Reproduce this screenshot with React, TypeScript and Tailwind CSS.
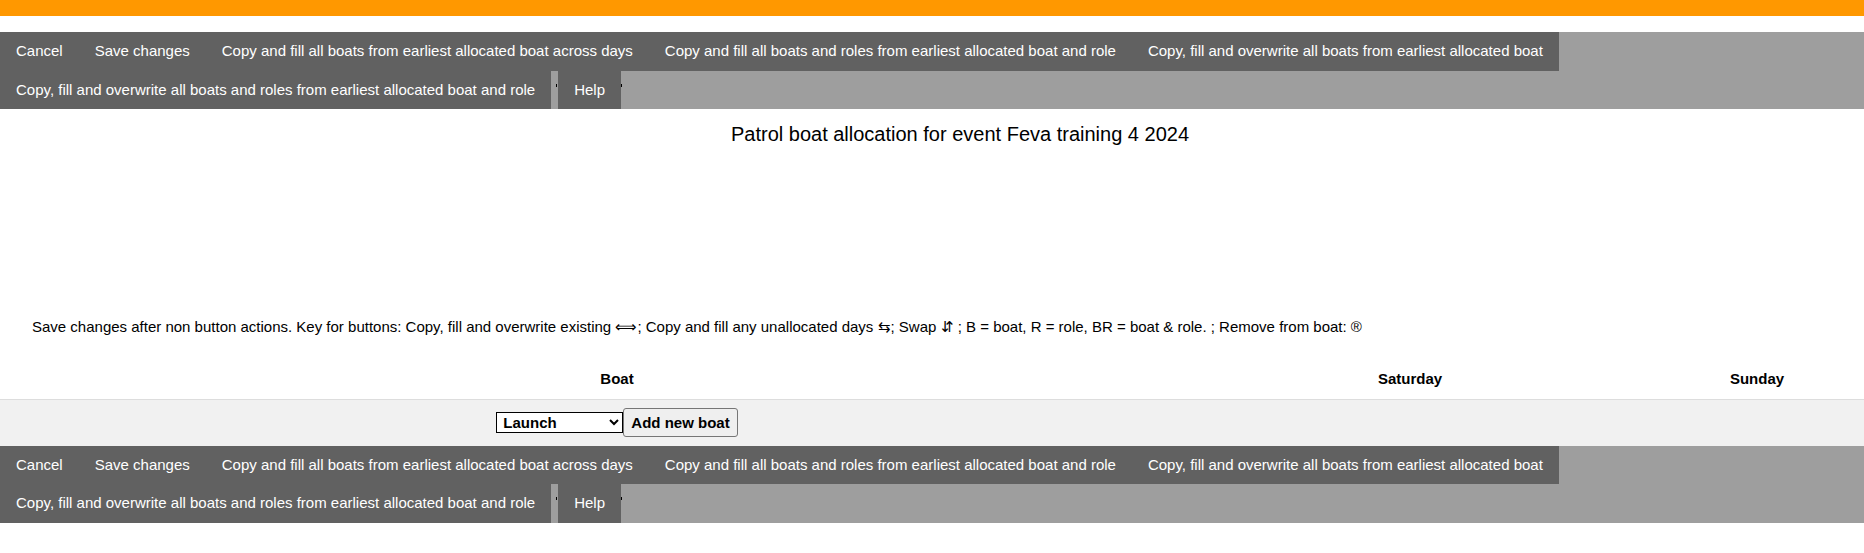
import React from 'react';

const navItems = [
  'Cancel',
  'Save changes',
  'Copy and fill all boats from earliest allocated boat across days',
  'Copy and fill all boats and roles from earliest allocated boat and role',
  'Copy, fill and overwrite all boats from earliest allocated boat',
  'Copy, fill and overwrite all boats and roles from earliest allocated boat and role',
];

const NavBar = () => (
  <div className="flex flex-wrap bg-[#9e9e9e]">
    {navItems.map((label) => (
      <button key={label} className="px-4 py-2 bg-[#616161] text-white text-[15px] leading-normal whitespace-nowrap">
        {label}
      </button>
    ))}
    {/* odd little gap + tick marks around Help */}
    <span className="relative w-[7px] h-[38.5px]">
      <span className="absolute left-[5px] top-[13px] w-px h-[3px] bg-black"></span>
    </span>
    <button className="px-4 py-2 bg-[#616161] text-white text-[15px] leading-normal">Help</button>
    <span className="relative w-[2px] h-[38.5px]">
      <span className="absolute left-0 top-[13px] w-px h-[3px] bg-black"></span>
    </span>
  </div>
);

const App = () => {
  return (
    <div className="min-h-screen bg-white text-black font-['Liberation_Sans',Arial,sans-serif] text-[15px]">
      <div className="h-4 bg-[#ff9800]"></div>
      <div className="h-4"></div>

      <NavBar />

      {/* Title */}
      <h2 className="mt-[10px] pl-[56px] text-center text-[20px] leading-[30px] font-normal">
        Patrol boat allocation for event Feva training 4 2024
      </h2>

      {/* blank area */}
      <div className="h-[167px]"></div>

      <p className="pl-8 leading-normal">
        Save changes after non button actions. Key for buttons: Copy, fill and overwrite existing ⟺; Copy and fill any unallocated days ⇆; Swap ⇵ ; B = boat, R = role, BR = boat &amp; role. ; Remove from boat: ®
      </p>

      {/* Allocation table */}
      <div className="mt-[22px] overflow-hidden">
        <div className="grid grid-cols-[1234px_352px_1fr] font-bold h-[39px] items-center border-b border-[#dddddd]">
          <div className="text-center">Boat</div>
          <div className="text-center">Saturday</div>
          <div className="pl-[64px] w-[278px] text-center">Sunday</div>
        </div>
        <div className="grid grid-cols-[1234px_352px_1fr] bg-[#f1f1f1] h-[46px] items-center">
          <div className="flex justify-center items-center">
            <select className="w-[127px] h-[21px] border border-black bg-white font-bold text-[15px] leading-none pl-[2px]">
              <option>Launch</option>
              <option>RIB</option>
              <option>Safety boat</option>
            </select>
            <button className="h-[29px] px-[7px] border border-[#767676] rounded-[3px] bg-[#efefef] font-bold text-[15px] leading-none">
              Add new boat
            </button>
          </div>
          <div></div>
          <div></div>
        </div>
      </div>

      <NavBar />
    </div>
  );
};

export default App;
